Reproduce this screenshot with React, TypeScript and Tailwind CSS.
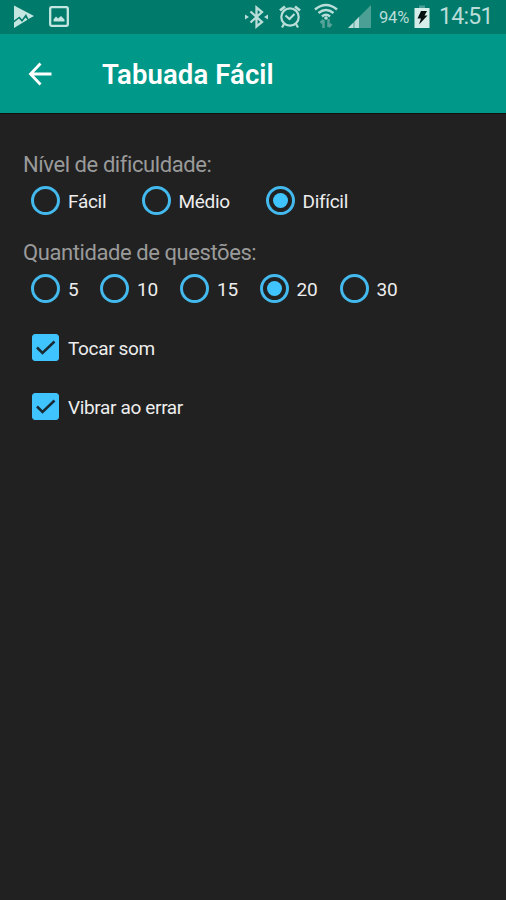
import { useState } from "react";

const levels = [
  { label: "Fácil", width: "w-[110.5px]" },
  { label: "Médio", width: "w-[124px]" },
  { label: "Difícil", width: "w-[110px]" },
];

const amounts = [
  { label: "5", width: "w-[69px]" },
  { label: "10", width: "w-[80px]" },
  { label: "15", width: "w-[79.5px]" },
  { label: "20", width: "w-[80px]" },
  { label: "30", width: "w-[80px]" },
];

function StatusBar() {
  return (
    <div className="flex h-[34px] items-center bg-[#007a6b] text-[#b9ddd8]">
      {/* notifications */}
      <svg className="ml-[13px] h-[34px] w-[22px]" viewBox="0 0 22 34" fill="#c4e6e0">
        <path d="M1 5.5 21 16 15.5 19 13 14 9 19.5 6.5 16.5 1 20.5Z" />
        <path d="M1 22.500 6 18.500 9 22 12.500 17.500 14.500 19.800 1 28Z" />
      </svg>
      <svg className="ml-3.5 h-[34px] w-5" viewBox="0 0 20 34" fill="none">
        <rect x="1.200" y="7.200" width="17.600" height="18.600" rx="1.500" stroke="#c4e6e0" strokeWidth="2.300" />
        <path d="M4.500 21.500V19.500L7 16.500 9 18.500 12 16 15.500 19.500V21.500Z" fill="#c4e6e0" />
      </svg>

      {/* system */}
      <svg className="ml-[175px] h-[34px] w-6" viewBox="0 0 24 34" fill="none" stroke="#b9ddd8" strokeWidth="2.300">
        <path d="M6.500 11.500 18 22 12.500 26.500V7.500L18 12 6.500 22.500" />
        <path d="M1 14.500 5 17 1 19.500ZM24 14.500 20 17 24 19.500Z" fill="#b9ddd8" stroke="none" />
      </svg>
      <svg className="ml-[11px] h-[34px] w-[22px]" viewBox="0 0 22 34" fill="none" stroke="#b9ddd8" strokeWidth="2.200">
        <circle cx="11" cy="17" r="8.700" />
        <path d="M6.500 15.500 10.500 19 15.500 14" />
        <path d="M1 10.500 6 6.500M21 10.500 16 6.500" strokeWidth="2.800" />
        <path d="M5 24 3 27.500M17 24 19 27.500" />
      </svg>
      <svg className="ml-[13px] h-[34px] w-6" viewBox="0 0 24 34" fill="none" stroke="#b9ddd8" strokeWidth="2.500">
        <path d="M1 9.500Q12 .5 23 9.500M4.500 13Q12 7 19.500 13M8 16.500Q12 13 16 16.500" />
        <circle cx="12" cy="18" r="1.800" fill="#b9ddd8" stroke="none" />
        <path d="M9.500 28V20M6.500 23 9.500 20M14.500 19V27M17.500 24 14.500 27" stroke="#56a399" strokeWidth="2.500" />
      </svg>
      <svg className="ml-2.5 h-[34px] w-[23px]" viewBox="0 0 23 34">
        <path d="M0 28 23 5V28Z" fill="#4c9f94" />
        <path d="M0 28 5.500 22.500V28ZM6.500 28V21.500L11 17V28Z" fill="#b9ddd8" />
      </svg>
      <span className="ml-2 mt-[3px] w-[35px] text-[16.5px] tracking-[-0.2px]">94%</span>
      <svg className="h-[34px] w-4" viewBox="0 0 16 34">
        <path d="M5 5.500H11V8H5Z" fill="#4c9f94" />
        <path d="M.5 8H15.500V28H.5Z" fill="#d5eeea" />
        <path d="M7 11H13L10.500 15.500H13.500L5 24.500 7 18.500H3.500Z" fill="#05110f" />
      </svg>
      <span className="ml-[9px] mt-px text-[23px] tracking-[-0.7px]">14:51</span>
    </div>
  );
}

function Radio({ label, checked, onSelect }: { label: string; checked: boolean; onSelect: () => void }) {
  return (
    <button role="radio" aria-checked={checked} onClick={onSelect} className="flex h-[29px] items-center gap-2">
      <span className="flex size-[29px] items-center justify-center rounded-full border-[3px] border-[#43b9ee]">
        {checked && <span className="size-[15px] rounded-full bg-[#40c4ff]" />}
      </span>
      <span className="mt-[3px] text-[19px] leading-[28px] tracking-[-0.3px] text-[#ededed]">{label}</span>
    </button>
  );
}

function Checkbox({ label, checked, onToggle }: { label: string; checked: boolean; onToggle: () => void }) {
  return (
    <button role="checkbox" aria-checked={checked} onClick={onToggle} className="flex h-[59px] items-center gap-[9px]">
      <svg className="size-[27px]" viewBox="0 0 27 27" fill="none">
        <rect x=".5" y=".5" width="26" height="26" rx="2.500" fill={checked ? "#40c4ff" : "none"} stroke="#40c4ff" />
        {checked && <path d="M5 13.500 10.500 19 22.500 7.500" stroke="#182b34" strokeWidth="2.500" />}
      </svg>
      <span className="mt-[3px] text-[19px] leading-[28px] tracking-[-0.35px] text-[#ededed]">{label}</span>
    </button>
  );
}

export default function App() {
  const [level, setLevel] = useState("Difícil");
  const [amount, setAmount] = useState("20");
  const [sound, setSound] = useState(true);
  const [vibrate, setVibrate] = useState(true);

  return (
    <div className="min-h-screen overflow-hidden bg-[#212121] font-[Roboto,sans-serif]">
      <StatusBar />

      <header className="flex h-20 items-center border-b border-[#101010] bg-[#009888] text-white">
        <button aria-label="Voltar" className="ml-[28px]">
          <svg className="size-6" viewBox="0 0 24 24" fill="none" stroke="currentColor" strokeWidth="2.800">
            <path d="M23.500 12H3M12.500 1.500 2.500 12 12.500 22.500" />
          </svg>
        </button>
        <h1 className="ml-[50px] mt-[3px] text-[27.5px] font-semibold tracking-[0.1px]">Tabuada Fácil</h1>
      </header>

      <main className="px-[23px] pt-[37px]">
        <h2 className="h-[35px] text-[22px] leading-[28px] tracking-[-0.42px] text-[#9a9a9a]">Nível de dificuldade:</h2>
        <div role="radiogroup" className="ml-2 flex">
          {levels.map((item) => (
            <div key={item.label} className={item.width}>
              <Radio label={item.label} checked={level === item.label} onSelect={() => setLevel(item.label)} />
            </div>
          ))}
        </div>

        <h2 className="mt-6 h-[35px] text-[22px] leading-[28px] tracking-[-0.42px] text-[#9a9a9a]">Quantidade de questões:</h2>
        <div role="radiogroup" className="ml-2 flex">
          {amounts.map((item) => (
            <div key={item.label} className={item.width}>
              <Radio label={item.label} checked={amount === item.label} onSelect={() => setAmount(item.label)} />
            </div>
          ))}
        </div>

        <div className="ml-[9px] mt-[15px]">
          <Checkbox label="Tocar som" checked={sound} onToggle={() => setSound(!sound)} />
          <Checkbox label="Vibrar ao errar" checked={vibrate} onToggle={() => setVibrate(!vibrate)} />
        </div>
      </main>
    </div>
  );
}
